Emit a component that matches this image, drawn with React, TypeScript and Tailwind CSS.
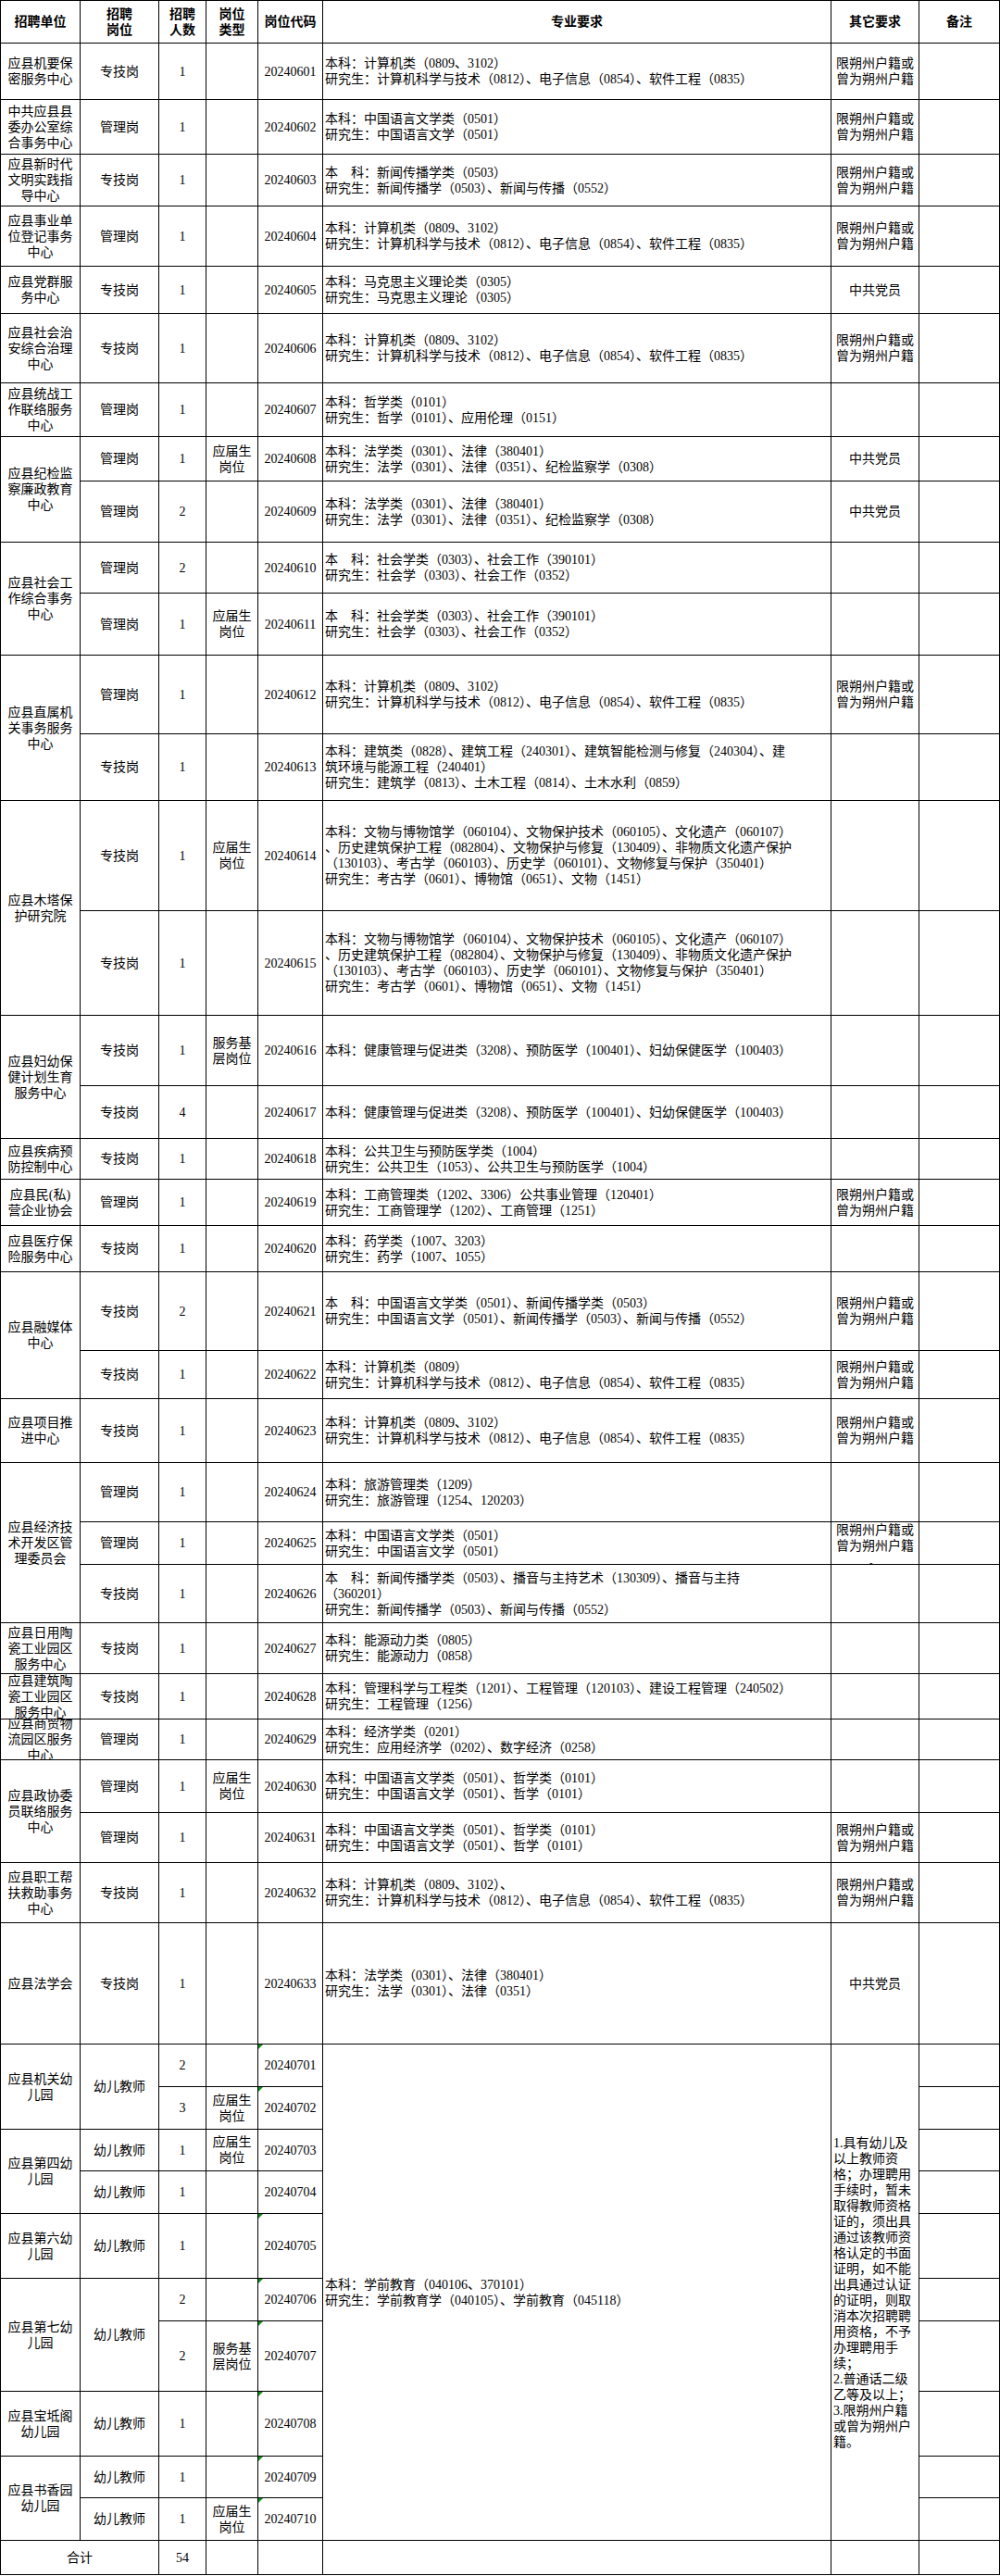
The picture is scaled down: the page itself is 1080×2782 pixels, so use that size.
import { Fragment } from 'react';

type Row = {
  unit?: string[] | null;
  unitSpan?: number;
  post?: string | null;
  postSpan?: number;
  num: string;
  type?: string[];
  code: string;
  major?: string[] | null;
  majorSpan?: number;
  other?: string[] | null;
  otherSpan?: number;
  otherTop?: boolean;
  otherLeft?: boolean;
  mark?: boolean;
};

const span: Record<number, string> = {
  1: '',
  2: 'row-span-2',
  3: 'row-span-3',
  10: 'row-span-10',
};

const HJ = ['限朔州户籍或', '曾为朔州户籍'];
const DY = ['中共党员'];
const YJS = ['应届生', '岗位'];
const FWJC = ['服务基', '层岗位'];
const JSJ = ['本科：计算机类（0809、3102）', '研究生：计算机科学与技术（0812）、电子信息（0854）、软件工程（0835）'];
const FX = ['本科：法学类（0301）、法律（380401）', '研究生：法学（0301）、法律（0351）、纪检监察学（0308）'];
const SH = ['本　科：社会学类（0303）、社会工作（390101）', '研究生：社会学（0303）、社会工作（0352）'];
const WW = [
  '本科：文物与博物馆学（060104）、文物保护技术（060105）、文化遗产（060107）',
  '、历史建筑保护工程（082804）、文物保护与修复（130409）、非物质文化遗产保护',
  '（130103）、考古学（060103）、历史学（060101）、文物修复与保护（350401）',
  '研究生：考古学（0601）、博物馆（0651）、文物（1451）',
];
const JK = ['本科：健康管理与促进类（3208）、预防医学（100401）、妇幼保健医学（100403）'];
const ZZ = ['本科：中国语言文学类（0501）、哲学类（0101）', '研究生：中国语言文学（0501）、哲学（0101）'];
const XQ = ['本科：学前教育（040106、370101）', '研究生：学前教育学（040105）、学前教育（045118）'];
const YE = [
  '1.具有幼儿及',
  '以上教师资',
  '格；办理聘用',
  '手续时，暂未',
  '取得教师资格',
  '证的，须出具',
  '通过该教师资',
  '格认定的书面',
  '证明，如不能',
  '出具通过认证',
  '的证明，则取',
  '消本次招聘聘',
  '用资格，不予',
  '办理聘用手',
  '续；',
  '2.普通话二级',
  '乙等及以上；',
  '3.限朔州户籍',
  '或曾为朔州户',
  '籍。',
];

const rows: Row[] = [
  { unit: ['应县机要保', '密服务中心'], post: '专技岗', num: '1', code: '20240601', major: JSJ, other: HJ },
  { unit: ['中共应县县', '委办公室综', '合事务中心'], post: '管理岗', num: '1', code: '20240602', major: ['本科：中国语言文学类（0501）', '研究生：中国语言文学（0501）'], other: HJ },
  { unit: ['应县新时代', '文明实践指', '导中心'], post: '专技岗', num: '1', code: '20240603', major: ['本　科：新闻传播学类（0503）', '研究生：新闻传播学（0503）、新闻与传播（0552）'], other: HJ },
  { unit: ['应县事业单', '位登记事务', '中心'], post: '管理岗', num: '1', code: '20240604', major: JSJ, other: HJ },
  { unit: ['应县党群服', '务中心'], post: '专技岗', num: '1', code: '20240605', major: ['本科：马克思主义理论类（0305）', '研究生：马克思主义理论（0305）'], other: DY },
  { unit: ['应县社会治', '安综合治理', '中心'], post: '专技岗', num: '1', code: '20240606', major: JSJ, other: HJ },
  { unit: ['应县统战工', '作联络服务', '中心'], post: '管理岗', num: '1', code: '20240607', major: ['本科：哲学类（0101）', '研究生：哲学（0101）、应用伦理（0151）'], other: [] },
  { unit: ['应县纪检监', '察廉政教育', '中心'], unitSpan: 2, post: '管理岗', num: '1', type: YJS, code: '20240608', major: FX, other: DY },
  { unit: null, post: '管理岗', num: '2', code: '20240609', major: FX, other: DY },
  { unit: ['应县社会工', '作综合事务', '中心'], unitSpan: 2, post: '管理岗', num: '2', code: '20240610', major: SH, other: [] },
  { unit: null, post: '管理岗', num: '1', type: YJS, code: '20240611', major: SH, other: [] },
  { unit: ['应县直属机', '关事务服务', '中心'], unitSpan: 2, post: '管理岗', num: '1', code: '20240612', major: JSJ, other: HJ },
  {
    unit: null,
    post: '专技岗',
    num: '1',
    code: '20240613',
    major: ['本科：建筑类（0828）、建筑工程（240301）、建筑智能检测与修复（240304）、建', '筑环境与能源工程（240401）', '研究生：建筑学（0813）、土木工程（0814）、土木水利（0859）'],
    other: [],
  },
  { unit: ['应县木塔保', '护研究院'], unitSpan: 2, post: '专技岗', num: '1', type: YJS, code: '20240614', major: WW, other: [] },
  { unit: null, post: '专技岗', num: '1', code: '20240615', major: WW, other: [] },
  { unit: ['应县妇幼保', '健计划生育', '服务中心'], unitSpan: 2, post: '专技岗', num: '1', type: FWJC, code: '20240616', major: JK, other: [] },
  { unit: null, post: '专技岗', num: '4', code: '20240617', major: JK, other: [] },
  { unit: ['应县疾病预', '防控制中心'], post: '专技岗', num: '1', code: '20240618', major: ['本科：公共卫生与预防医学类（1004）', '研究生：公共卫生（1053）、公共卫生与预防医学（1004）'], other: [] },
  { unit: ['应县民(私)', '营企业协会'], post: '管理岗', num: '1', code: '20240619', major: ['本科：工商管理类（1202、3306）公共事业管理（120401）', '研究生：工商管理学（1202）、工商管理（1251）'], other: HJ },
  { unit: ['应县医疗保', '险服务中心'], post: '专技岗', num: '1', code: '20240620', major: ['本科：药学类（1007、3203）', '研究生：药学（1007、1055）'], other: [] },
  {
    unit: ['应县融媒体', '中心'],
    unitSpan: 2,
    post: '专技岗',
    num: '2',
    code: '20240621',
    major: ['本　科：中国语言文学类（0501）、新闻传播学类（0503）', '研究生：中国语言文学（0501）、新闻传播学（0503）、新闻与传播（0552）'],
    other: HJ,
  },
  { unit: null, post: '专技岗', num: '1', code: '20240622', major: ['本科：计算机类（0809）', '研究生：计算机科学与技术（0812）、电子信息（0854）、软件工程（0835）'], other: HJ },
  { unit: ['应县项目推', '进中心'], post: '专技岗', num: '1', code: '20240623', major: JSJ, other: HJ },
  { unit: ['应县经济技', '术开发区管', '理委员会'], unitSpan: 3, post: '管理岗', num: '1', code: '20240624', major: ['本科：旅游管理类（1209）', '研究生：旅游管理（1254、120203）'], other: [] },
  { unit: null, post: '管理岗', num: '1', code: '20240625', major: ['本科：中国语言文学类（0501）', '研究生：中国语言文学（0501）'], other: ['限朔州户籍或', '曾为朔州户籍', '。'], otherTop: true },
  {
    unit: null,
    post: '专技岗',
    num: '1',
    code: '20240626',
    major: ['本　科：新闻传播学类（0503）、播音与主持艺术（130309）、播音与主持', '（360201）', '研究生：新闻传播学（0503）、新闻与传播（0552）'],
    other: [],
  },
  { unit: ['应县日用陶', '瓷工业园区', '服务中心'], post: '专技岗', num: '1', code: '20240627', major: ['本科：能源动力类（0805）', '研究生：能源动力（0858）'], other: [] },
  {
    unit: ['应县建筑陶', '瓷工业园区', '服务中心'],
    post: '专技岗',
    num: '1',
    code: '20240628',
    major: ['本科：管理科学与工程类（1201）、工程管理（120103）、建设工程管理（240502）', '研究生：工程管理（1256）'],
    other: [],
  },
  { unit: ['应县商贸物', '流园区服务', '中心'], post: '管理岗', num: '1', code: '20240629', major: ['本科：经济学类（0201）', '研究生：应用经济学（0202）、数字经济（0258）'], other: [] },
  { unit: ['应县政协委', '员联络服务', '中心'], unitSpan: 2, post: '管理岗', num: '1', type: YJS, code: '20240630', major: ZZ, other: [] },
  { unit: null, post: '管理岗', num: '1', code: '20240631', major: ZZ, other: HJ },
  { unit: ['应县职工帮', '扶救助事务', '中心'], post: '专技岗', num: '1', code: '20240632', major: ['本科：计算机类（0809、3102）、', '研究生：计算机科学与技术（0812）、电子信息（0854）、软件工程（0835）'], other: HJ },
  { unit: ['应县法学会'], post: '专技岗', num: '1', code: '20240633', major: ['本科：法学类（0301）、法律（380401）', '研究生：法学（0301）、法律（0351）'], other: DY },
  { unit: ['应县机关幼', '儿园'], unitSpan: 2, post: '幼儿教师', postSpan: 2, num: '2', code: '20240701', major: XQ, majorSpan: 10, other: YE, otherSpan: 10, otherLeft: true, mark: true },
  { unit: null, post: null, num: '3', type: YJS, code: '20240702', major: null, other: null, mark: true },
  { unit: ['应县第四幼', '儿园'], unitSpan: 2, post: '幼儿教师', num: '1', type: YJS, code: '20240703', major: null, other: null },
  { unit: null, post: '幼儿教师', num: '1', code: '20240704', major: null, other: null },
  { unit: ['应县第六幼', '儿园'], post: '幼儿教师', num: '1', code: '20240705', major: null, other: null, mark: true },
  { unit: ['应县第七幼', '儿园'], unitSpan: 2, post: '幼儿教师', postSpan: 2, num: '2', code: '20240706', major: null, other: null, mark: true },
  { unit: null, post: null, num: '2', type: FWJC, code: '20240707', major: null, other: null, mark: true },
  { unit: ['应县宝坻阁', '幼儿园'], post: '幼儿教师', num: '1', code: '20240708', major: null, other: null, mark: true },
  { unit: ['应县书香园', '幼儿园'], unitSpan: 2, post: '幼儿教师', num: '1', code: '20240709', major: null, other: null, mark: true },
  { unit: null, post: '幼儿教师', num: '1', type: YJS, code: '20240710', major: null, other: null, mark: true },
];

function Lines({ items }: { items: string[] }) {
  return (
    <div>
      {items.map((t, i) => (
        <div key={i} className="whitespace-nowrap">
          {t}
        </div>
      ))}
    </div>
  );
}

const cell = 'relative flex items-center justify-center overflow-hidden bg-white text-center';

export default function App() {
  return (
    <div className="w-[1080px] bg-white font-['Liberation_Serif','Noto_Sans_CJK_SC',serif] text-[14px] leading-[17px] text-black">
      <div className="grid grid-cols-[85px_84px_50px_55px_69px_548px_94px_86px] grid-rows-[45px_60px_58px_55px_64px_50px_74px_57px_47px_65px_54px_66px_84px_71px_118px_112px_75px_56px_43px_49px_49px_84px_51px_68px_63px_45px_62px_54px_48px_43px_56px_53px_64px_130px_45px_45px_44px_45px_69px_45px_75px_69px_44px_45px_36px] gap-px bg-black p-px">
        {/* header */}
        <div className={`${cell} font-bold`}>招聘单位</div>
        <div className={`${cell} font-bold`}>
          <Lines items={['招聘', '岗位']} />
        </div>
        <div className={`${cell} font-bold`}>
          <Lines items={['招聘', '人数']} />
        </div>
        <div className={`${cell} font-bold`}>
          <Lines items={['岗位', '类型']} />
        </div>
        <div className={`${cell} font-bold`}>岗位代码</div>
        <div className={`${cell} font-bold`}>专业要求</div>
        <div className={`${cell} font-bold`}>其它要求</div>
        <div className={`${cell} font-bold`}>备注</div>

        {rows.map((r) => (
          <Fragment key={r.code}>
            {r.unit && (
              <div className={`${cell} ${span[r.unitSpan ?? 1]}`}>
                <Lines items={r.unit} />
              </div>
            )}
            {r.post !== null && <div className={`${cell} ${span[r.postSpan ?? 1]}`}>{r.post}</div>}
            <div className={cell}>{r.num}</div>
            <div className={cell}>
              <Lines items={r.type ?? []} />
            </div>
            <div className={cell}>
              {r.mark && (
                <span className="absolute left-0 top-0 h-0 w-0 border-r-[5px] border-t-[5px] border-r-transparent border-t-[#138a1c]" />
              )}
              {r.code}
            </div>
            {r.major && (
              <div className={`${cell} ${span[r.majorSpan ?? 1]} justify-start pl-[2px] text-left`}>
                <Lines items={r.major} />
              </div>
            )}
            {r.other && (
              <div
                className={`${cell} ${span[r.otherSpan ?? 1]} ${r.otherTop ? 'items-start' : ''} ${
                  r.otherLeft ? 'justify-start pl-[2px] text-left' : ''
                }`}
              >
                <Lines items={r.other} />
              </div>
            )}
            <div className="bg-white" />
          </Fragment>
        ))}

        {/* total */}
        <div className={`${cell} col-span-2`}>合计</div>
        <div className={cell}>54</div>
        <div className="bg-white" />
        <div className="bg-white" />
        <div className="bg-white" />
        <div className="bg-white" />
        <div className="bg-white" />
      </div>
    </div>
  );
}
